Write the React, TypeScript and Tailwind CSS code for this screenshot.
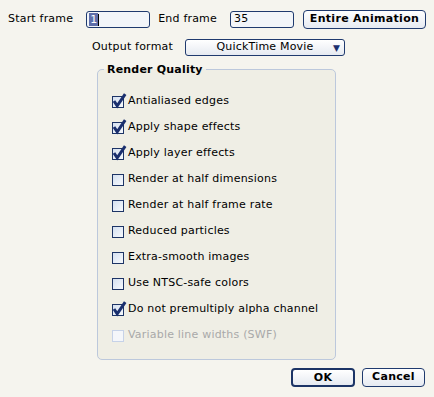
import React from "react";

const options = [
  { label: "Antialiased edges", checked: true },
  { label: "Apply shape effects", checked: true },
  { label: "Apply layer effects", checked: true },
  { label: "Render at half dimensions", checked: false },
  { label: "Render at half frame rate", checked: false },
  { label: "Reduced particles", checked: false },
  { label: "Extra-smooth images", checked: false },
  { label: "Use NTSC-safe colors", checked: false },
  { label: "Do not premultiply alpha channel", checked: true },
  { label: "Variable line widths (SWF)", checked: false, disabled: true },
];

function Box({ checked, disabled }: { checked: boolean; disabled?: boolean }) {
  return (
    <svg width="16" height="16" viewBox="0 0 16 16" className="shrink-0 overflow-visible">
      <defs>
        <linearGradient id="cbg" x1="0" y1="0" x2="1" y2="1">
          <stop offset="0" stopColor="#d3dff0" />
          <stop offset="1" stopColor="#f8fafd" />
        </linearGradient>
      </defs>
      <rect
        x="2.5"
        y="3.5"
        width="11"
        height="11"
        fill={disabled ? "#f4f6fa" : "url(#cbg)"}
        stroke={disabled ? "#c6d2e8" : "#1d3466"}
        strokeWidth="1"
      />
      {checked && (
        <path d="M4 8 L7.2 12.8 L15.2 1.2" fill="none" stroke="#1a2f6e" strokeWidth="3" strokeLinejoin="miter" />
      )}
    </svg>
  );
}

export default function App() {
  return (
    <div
      className="w-[434px] h-[397px] bg-[#f5f4ee] text-[11px] tracking-[0.2px] text-black overflow-hidden"
      style={{ fontFamily: '"DejaVu Sans", Verdana, sans-serif' }}
    >
      {/* frame range */}
      <div className="flex items-center h-[19px] mt-[10px]">
        <span className="ml-[8px]">Start frame</span>
        <div className="ml-[13px] w-[64px] h-[17px] rounded-[3px] border border-[#1f3a6e] bg-[#f2f5f9] flex items-center pl-[2px]">
          <span className="bg-[#5f6eaa] text-white px-[1px] leading-[13px]">1</span>
          <span className="w-px h-[12px] bg-black"></span>
        </div>
        <span className="ml-[8px]">End frame</span>
        <div className="ml-[13px] w-[64px] h-[17px] rounded-[3px] border border-[#1f3a6e] bg-[#f2f5f9] flex items-center pl-[3px]">
          35
        </div>
        <button className="ml-[9px] w-[123px] h-[19px] rounded-[4px] border border-[#1f3a6e] bg-gradient-to-b from-white to-[#e6eaf1] font-bold tracking-[0.3px]">
          Entire Animation
        </button>
      </div>

      {/* output format */}
      <div className="flex items-center h-[17px] mt-[10px]">
        <span className="ml-[92px]">Output format</span>
        <div className="relative ml-[12px] w-[160px] h-[17px] rounded-[3px] border border-[#1f3a6e] bg-gradient-to-b from-white to-[#e6eaf1] flex items-center justify-center">
          QuickTime Movie
          <span className="absolute right-[4px] top-[2px] text-[9px] text-[#1a2f6e]">▼</span>
        </div>
      </div>

      {/* render quality group */}
      <fieldset className="ml-[97px] mt-[7px] w-[239px] h-[297px] border border-[#bcc8dc] rounded-[5px] bg-[#efeee5] pl-[6px]">
        <legend className="px-[3px] font-bold leading-[13px]">Render Quality</legend>
        <div className="flex flex-col pt-[12px]">
          {options.map((o) => (
            <div key={o.label} className="flex items-center h-[26px] ml-[6px]">
              <Box checked={o.checked} disabled={o.disabled} />
              <span className={`ml-[2px] ${o.disabled ? "text-[#a9a9a9]" : ""}`}>{o.label}</span>
            </div>
          ))}
        </div>
      </fieldset>

      {/* dialog buttons */}
      <div className="flex justify-end gap-[7px] mt-[8px] pr-[9px]">
        <button className="w-[64px] h-[19px] rounded-[4px] border-2 border-[#1c3466] bg-gradient-to-b from-white to-[#e6eaf1] font-bold">
          OK
        </button>
        <button className="w-[63px] h-[19px] rounded-[4px] border border-[#1f3a6e] bg-gradient-to-b from-white to-[#e6eaf1] font-bold tracking-[0.3px]">
          Cancel
        </button>
      </div>
    </div>
  );
}
